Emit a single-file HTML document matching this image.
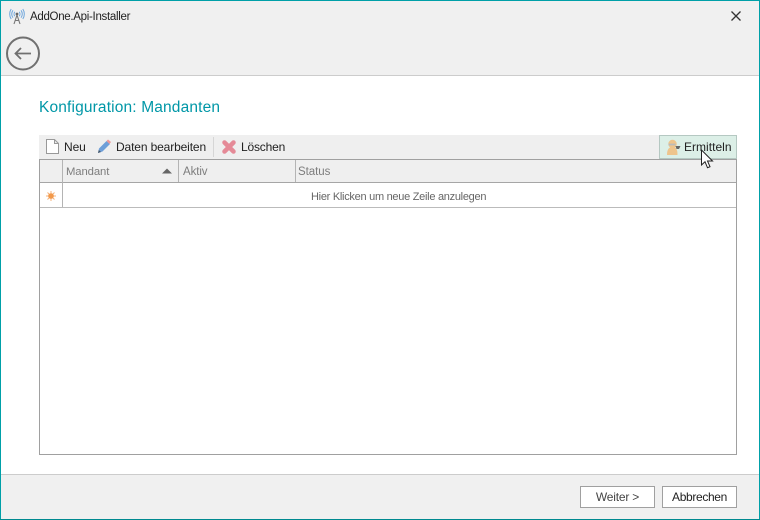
<!DOCTYPE html>
<html><head><meta charset="utf-8"><style>
html,body{margin:0;padding:0;background:#fff}
#w{position:relative;width:760px;height:520px;overflow:hidden;background:#fff;font-family:"Liberation Sans",sans-serif;font-size:12px;color:#222}
#w div,#w svg{position:absolute}
.t{white-space:nowrap;line-height:14px}
</style></head><body><div id="w">
<div style="left:0;top:0;width:760px;height:76px;background:#f0f0f0;border-bottom:1px solid #ccc;box-sizing:border-box"></div>
<div style="left:0;top:474px;width:760px;height:46px;background:#f0f0f0;border-top:1px solid #ccc;box-sizing:border-box"></div>
<svg style="left:9px;top:8px" width="16" height="17" viewBox="0 0 16 17" fill="none"><path d="M8 7L5 16M8 7l3 9M6 12.500h4" stroke="#777" stroke-width="1.100"/><circle cx="8" cy="6" r="1.400" fill="#666"/><path d="M5.800 3.800a3.500 3.500 0 0 0 0 4.400M10.200 3.800a3.500 3.500 0 0 1 0 4.400M4 2.300a6 6 0 0 0 0 7.400M12 2.300a6 6 0 0 1 0 7.400M2.200 1a9 9 0 0 0 0 10M13.800 1a9 9 0 0 1 0 10" stroke="#6ea6dc" stroke-width="1"/></svg>
<div class="t" style="left:30px;top:10px;font-size:11.500px;letter-spacing:-.3px">AddOne.Api-Installer</div>
<svg style="left:731px;top:11px" width="10" height="10" viewBox="0 0 10 10"><path d="M.5.500l9 9M9.500.500l-9 9" stroke="#333" stroke-width="1.300"/></svg>
<svg style="left:5px;top:36px" width="36" height="36" viewBox="0 0 36 36" fill="none"><circle cx="18" cy="17.500" r="16" stroke="#707070" stroke-width="2"/><path d="M10.500 17.500h15.500M16 12l-5.500 5.500 5.500 5.500" stroke="#707070" stroke-width="1.800"/></svg>
<div class="t" style="left:39px;top:99px;font-size:15.500px;line-height:18px;color:#0097a7;letter-spacing:.15px">Konfiguration: Mandanten</div>

<div style="left:39px;top:135px;width:698px;height:24px;background:#efefef"></div>
<svg style="left:46px;top:139px" width="13" height="15" viewBox="0 0 13 15" fill="#fff"><path d="M.5.500h8l4 4v10H.500zM8.500.500v4h4" stroke="#999"/></svg>
<div class="t" style="left:64px;top:140px;letter-spacing:-.1px">Neu</div>
<svg style="left:97px;top:139px" width="14" height="15" viewBox="0 0 14 15"><path d="M1 14l1-4.500 7.500-7.500 3.500 3-7.500 7.500z" fill="#6f9fd8"/><path d="M9.500 2l1.500-1.500 3 2.500-1.500 2z" fill="#e99"/><path d="M1 14l.8-3 2.200 2z" fill="#456"/></svg>
<div class="t" style="left:116px;top:140px;letter-spacing:-.13px">Daten bearbeiten</div>
<div style="left:213px;top:137px;width:1px;height:20px;background:#d6d6d6"></div>
<svg style="left:222px;top:140px" width="14" height="14" viewBox="0 0 14 14"><path d="M2.500 2.500l9 9M11.500 2.500l-9 9" stroke="#e58a97" stroke-width="4.500" stroke-linecap="round"/></svg>
<div class="t" style="left:241px;top:140px;letter-spacing:-.18px">Löschen</div>

<div style="left:659px;top:135px;width:78px;height:24px;background:#dcefe7;border:1px solid #b5c8c2;box-sizing:border-box"></div>
<svg style="left:666px;top:139px" width="16" height="17" viewBox="0 0 16 17"><circle cx="6.500" cy="5" r="4.200" fill="#eec48c"/><path d="M1 16c0-6 2-8 5.500-8s5 2 5 8z" fill="#eec48c"/><path d="M2.500 5.500h7" stroke="#bbb" stroke-width="1.800"/><path d="M9.500 7h5l-1.500 3h-2.500z" fill="#666"/></svg>
<div class="t" style="left:684px;top:140px;letter-spacing:.02px">Ermitteln</div>

<div style="left:39px;top:159px;width:698px;height:296px;border:1px solid #a0a0a0;box-sizing:border-box;background:#fff"></div>
<div style="left:40px;top:160px;width:696px;height:22px;background:#efefef;border-bottom:1px solid #a6a6a6"></div>
<div style="left:40px;top:183px;width:696px;height:24px;border-bottom:1px solid #bbb"></div>
<div style="left:62px;top:160px;width:1px;height:47px;background:#b4b4b4"></div>
<div style="left:178px;top:160px;width:1px;height:22px;background:#b4b4b4"></div>
<div style="left:295px;top:160px;width:1px;height:22px;background:#b4b4b4"></div>
<div class="t" style="left:66px;top:165px;font-size:11.300px;color:#7d7d7d;letter-spacing:-.1px">Mandant</div>
<svg style="left:162px;top:168px" width="10" height="6"><path d="M0 5.500L5 .500l5 5z" fill="#666"/></svg>
<div class="t" style="left:183px;top:165px;font-size:11.500px;color:#7d7d7d;letter-spacing:-.1px">Aktiv</div>
<div class="t" style="left:298px;top:165px;font-size:11.500px;color:#7d7d7d;letter-spacing:-.05px">Status</div>
<svg style="left:46px;top:191px" width="10" height="10" viewBox="0 0 10 10"><path d="M5 0v10M0 5h10M1.500 1.500l7 7M8.500 1.500l-7 7" stroke="#f5b27a" stroke-width="1"/><circle cx="5" cy="5" r="2.800" fill="#f2994a"/></svg>
<div class="t" style="left:311px;top:190px;font-size:11px;color:#666;letter-spacing:-.28px">Hier Klicken um neue Zeile anzulegen</div>

<svg style="left:700px;top:149px" width="15" height="21" viewBox="0 0 15 21"><path d="M1.500 1v15l3.500-3.300 2.500 6 2.500-1-2.500-5.700h5z" fill="#fff" stroke="#222"/></svg>

<div style="left:580px;top:486px;width:75px;height:22px;background:#fff;border:1px solid #a0a0a0;box-sizing:border-box"></div>
<div class="t" style="left:580px;top:490px;width:75px;text-align:center;color:#444;letter-spacing:-.2px">Weiter &gt;</div>
<div style="left:662px;top:486px;width:75px;height:22px;background:#fff;border:1px solid #a0a0a0;box-sizing:border-box"></div>
<div class="t" style="left:662px;top:490px;width:75px;text-align:center;letter-spacing:-.35px">Abbrechen</div>

<div style="left:0;top:0;width:760px;height:1px;background:#00a0a8"></div>
<div style="left:0;top:0;width:1px;height:520px;background:#00a0a8"></div>
<div style="left:759px;top:0;width:1px;height:520px;background:#00a0a8"></div>
<div style="left:0;top:519px;width:760px;height:1px;background:#008a90"></div>
</div></body></html>
